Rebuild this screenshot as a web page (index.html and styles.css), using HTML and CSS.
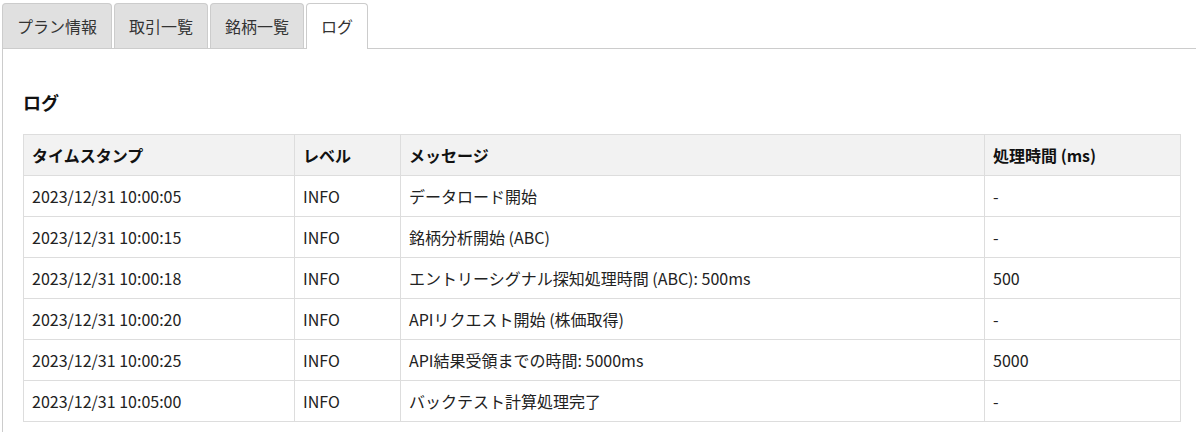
FILE: index.html
```html
<!DOCTYPE html>
<html lang="ja">
<head>
<meta charset="utf-8">
<title>ログ</title>
<link rel="stylesheet" href="styles.css">
</head>
<body>
<div class="page">
  <div class="tabs">
    <div class="tab">プラン情報</div>
    <div class="tab">取引一覧</div>
    <div class="tab">銘柄一覧</div>
    <div class="tab active">ログ</div>
  </div>
  <div class="panel">
    <h2 class="title">ログ</h2>
    <table class="log">
      <thead>
        <tr>
          <th class="c-time">タイムスタンプ</th>
          <th class="c-level">レベル</th>
          <th class="c-msg">メッセージ</th>
          <th class="c-dur">処理時間 (ms)</th>
        </tr>
      </thead>
      <tbody>
        <tr><td>2023/12/31 10:00:05</td><td>INFO</td><td>データロード開始</td><td>-</td></tr>
        <tr><td>2023/12/31 10:00:15</td><td>INFO</td><td>銘柄分析開始 (ABC)</td><td>-</td></tr>
        <tr><td>2023/12/31 10:00:18</td><td>INFO</td><td>エントリーシグナル探知処理時間 (ABC): 500ms</td><td>500</td></tr>
        <tr><td>2023/12/31 10:00:20</td><td>INFO</td><td>APIリクエスト開始 (株価取得)</td><td>-</td></tr>
        <tr><td>2023/12/31 10:00:25</td><td>INFO</td><td>API結果受領までの時間: 5000ms</td><td>5000</td></tr>
        <tr><td>2023/12/31 10:05:00</td><td>INFO</td><td>バックテスト計算処理完了</td><td>-</td></tr>
      </tbody>
    </table>
  </div>
</div>
</body>
</html>
```
FILE: styles.css
```css
html, body {
  margin: 0;
  padding: 0;
  background: #fff;
  overflow: hidden;
}
body {
  font-family: "Noto Sans CJK JP", "Noto Sans", sans-serif;
  font-size: 16px;
  color: #222;
}
.page {
  padding: 3px 0 0 2px;
}
.tabs {
  display: flex;
  gap: 2px;
  position: relative;
  z-index: 1;
}
.tab {
  padding: 10px 14px;
  line-height: 24px;
  background: #e0e0e0;
  border: 1px solid #ccc;
  border-bottom: none;
  border-radius: 4px 4px 0 0;
  color: #333;
  white-space: nowrap;
}
.tab.active {
  background: #fff;
  margin-bottom: -1px;
  padding-bottom: 11px;
}
.panel {
  width: 1158px;
  border: 1px solid #ccc;
  padding: 20px;
  background: #fff;
}
.title {
  margin: 20px 0 18px;
  font-size: 18px;
  line-height: 27px;
  font-weight: bold;
  color: #111;
}
.log {
  width: 100%;
  border-collapse: collapse;
  table-layout: fixed;
}
.log th, .log td {
  border: 1px solid #ddd;
  padding: 8px 8px;
  line-height: 24px;
  text-align: left;
  white-space: nowrap;
}
.log th {
  background: #f2f2f2;
  font-weight: bold;
  color: #111;
}
.c-time { width: 254px; }
.c-level { width: 89px; }
.c-msg { width: 567px; }
.c-dur { width: auto; }
```
